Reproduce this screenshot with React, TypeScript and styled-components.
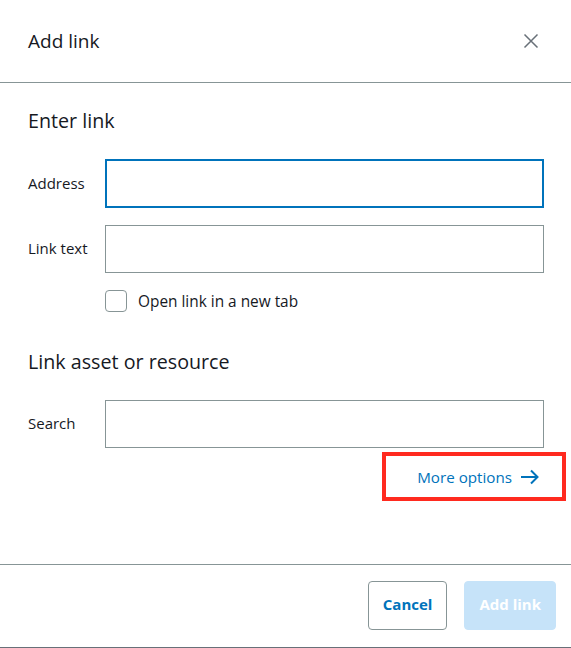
import React, { useState } from 'react';
import styled, { createGlobalStyle } from 'styled-components';

const GlobalStyle = createGlobalStyle`
  html, body {
    margin: 0;
    padding: 0;
    background: #ffffff;
  }
  body {
    font-family: 'Open Sans', 'Noto Sans', sans-serif;
    color: #16191f;
  }
`;

const Dialog = styled.div`
  width: 571px;
  height: 648px;
  display: flex;
  flex-direction: column;
  box-sizing: border-box;
  border-bottom: 1px solid #687078;
  background: #ffffff;
`;

const Header = styled.header`
  height: 82px;
  flex-shrink: 0;
  display: flex;
  align-items: center;
  justify-content: space-between;
  padding: 0 28px 0 28px;
  border-bottom: 1px solid #879596;
`;

const Title = styled.h1`
  margin: 0;
  font-size: 19px;
  font-weight: 400;
  color: #16191f;
`;

const CloseButton = styled.button`
  width: 24px;
  height: 24px;
  padding: 0;
  border: none;
  background: none;
  display: flex;
  align-items: center;
  justify-content: center;
  cursor: pointer;
  color: #687078;
`;

const Body = styled.main`
  flex: 1;
  padding: 24px 27px 0 28px;
  display: flex;
  flex-direction: column;
`;

const SectionTitle = styled.h2<{ $gap: number }>`
  margin: ${p => p.$gap}px 0 0;
  font-size: 19.7px;
  line-height: 28px;
  font-weight: 400;
  color: #16191f;
`;

const Field = styled.label<{ $gap: number }>`
  display: flex;
  align-items: center;
  margin-top: ${p => p.$gap}px;
`;

const FieldLabel = styled.span`
  width: 77px;
  flex-shrink: 0;
  font-size: 15px;
  line-height: 20px;
  margin-top: -2px;
  color: #16191f;
`;

const Input = styled.input<{ $focused?: boolean }>`
  flex: 1;
  height: ${p => (p.$focused ? 49 : 48)}px;
  box-sizing: border-box;
  border: ${p => (p.$focused ? '2px solid #0073bb' : '1px solid #879596')};
  border-radius: 0;
  padding: 0 12px;
  font-family: inherit;
  font-size: 15px;
  color: #16191f;
  outline: none;
`;

const CheckRow = styled.label`
  display: flex;
  align-items: center;
  gap: 11px;
  margin: 17px 0 0 77px;
  font-size: 15.4px;
  color: #16191f;
  cursor: pointer;
`;

const Box = styled.span<{ $checked: boolean }>`
  width: 22px;
  height: 22px;
  box-sizing: border-box;
  border: 1px solid #879596;
  border-radius: 4px;
  background: ${p => (p.$checked ? '#0073bb' : '#ffffff')};
`;

const HiddenCheck = styled.input`
  display: none;
`;

const OptionsRow = styled.div`
  display: flex;
  justify-content: flex-end;
  margin-top: 8px;
`;

const MoreButton = styled.button`
  position: relative;
  height: 41px;
  display: flex;
  align-items: center;
  gap: 8px;
  padding: 0 4px 0 14px;
  border: none;
  background: none;
  font-family: inherit;
  font-size: 15.2px;
  color: #0073bb;
  cursor: pointer;
`;

const Highlight = styled.span`
  position: absolute;
  top: -4px;
  bottom: -4px;
  left: -21px;
  right: -22px;
  border: 4px solid #ff2a1f;
  pointer-events: none;
`;

const Footer = styled.footer`
  height: 83px;
  flex-shrink: 0;
  box-sizing: border-box;
  border-top: 1px solid #879596;
  display: flex;
  justify-content: flex-end;
  align-items: flex-start;
  gap: 17px;
  padding: 16px 15px 0 0;
`;

const Button = styled.button<{ $primary?: boolean }>`
  height: 49px;
  box-sizing: border-box;
  padding: 0 14px 3px;
  border-radius: 4px;
  font-family: inherit;
  font-size: 15px;
  font-weight: 700;
  cursor: pointer;
  border: ${p => (p.$primary ? '1px solid #c6e3f9' : '1px solid #879596')};
  background: ${p => (p.$primary ? '#c6e3f9' : '#ffffff')};
  color: ${p => (p.$primary ? '#ffffff' : '#0073bb')};
`;

const App: React.FC = () => {
  const [newTab, setNewTab] = useState(false);

  return (
    <>
      <GlobalStyle />
      <Dialog>
        <Header>
          <Title>Add link</Title>
          <CloseButton aria-label="Close">
            <svg width="16" height="16" viewBox="0 0 16 16" fill="none">
              <path d="M1.5 1.5l13 13M14.5 1.5l-13 13" stroke="currentColor" strokeWidth="1.5" />
            </svg>
          </CloseButton>
        </Header>
        <Body>
          <SectionTitle $gap={0}>Enter link</SectionTitle>
          <Field $gap={24}>
            <FieldLabel>Address</FieldLabel>
            <Input $focused />
          </Field>
          <Field $gap={17}>
            <FieldLabel>Link text</FieldLabel>
            <Input />
          </Field>
          <CheckRow>
            <HiddenCheck type="checkbox" checked={newTab} onChange={e => setNewTab(e.target.checked)} />
            <Box $checked={newTab} />
            Open link in a new tab
          </CheckRow>
          <SectionTitle $gap={36}>Link asset or resource</SectionTitle>
          <Field $gap={24}>
            <FieldLabel>Search</FieldLabel>
            <Input />
          </Field>
          <OptionsRow>
            <MoreButton>
              More options
              <svg width="20" height="16" viewBox="0 0 20 16" fill="none">
                <path d="M1 8h17M11 1.5L17.5 8 11 14.5" stroke="currentColor" strokeWidth="2" />
              </svg>
              <Highlight />
            </MoreButton>
          </OptionsRow>
        </Body>
        <Footer>
          <Button>Cancel</Button>
          <Button $primary>Add link</Button>
        </Footer>
      </Dialog>
    </>
  );
};

export default App;
